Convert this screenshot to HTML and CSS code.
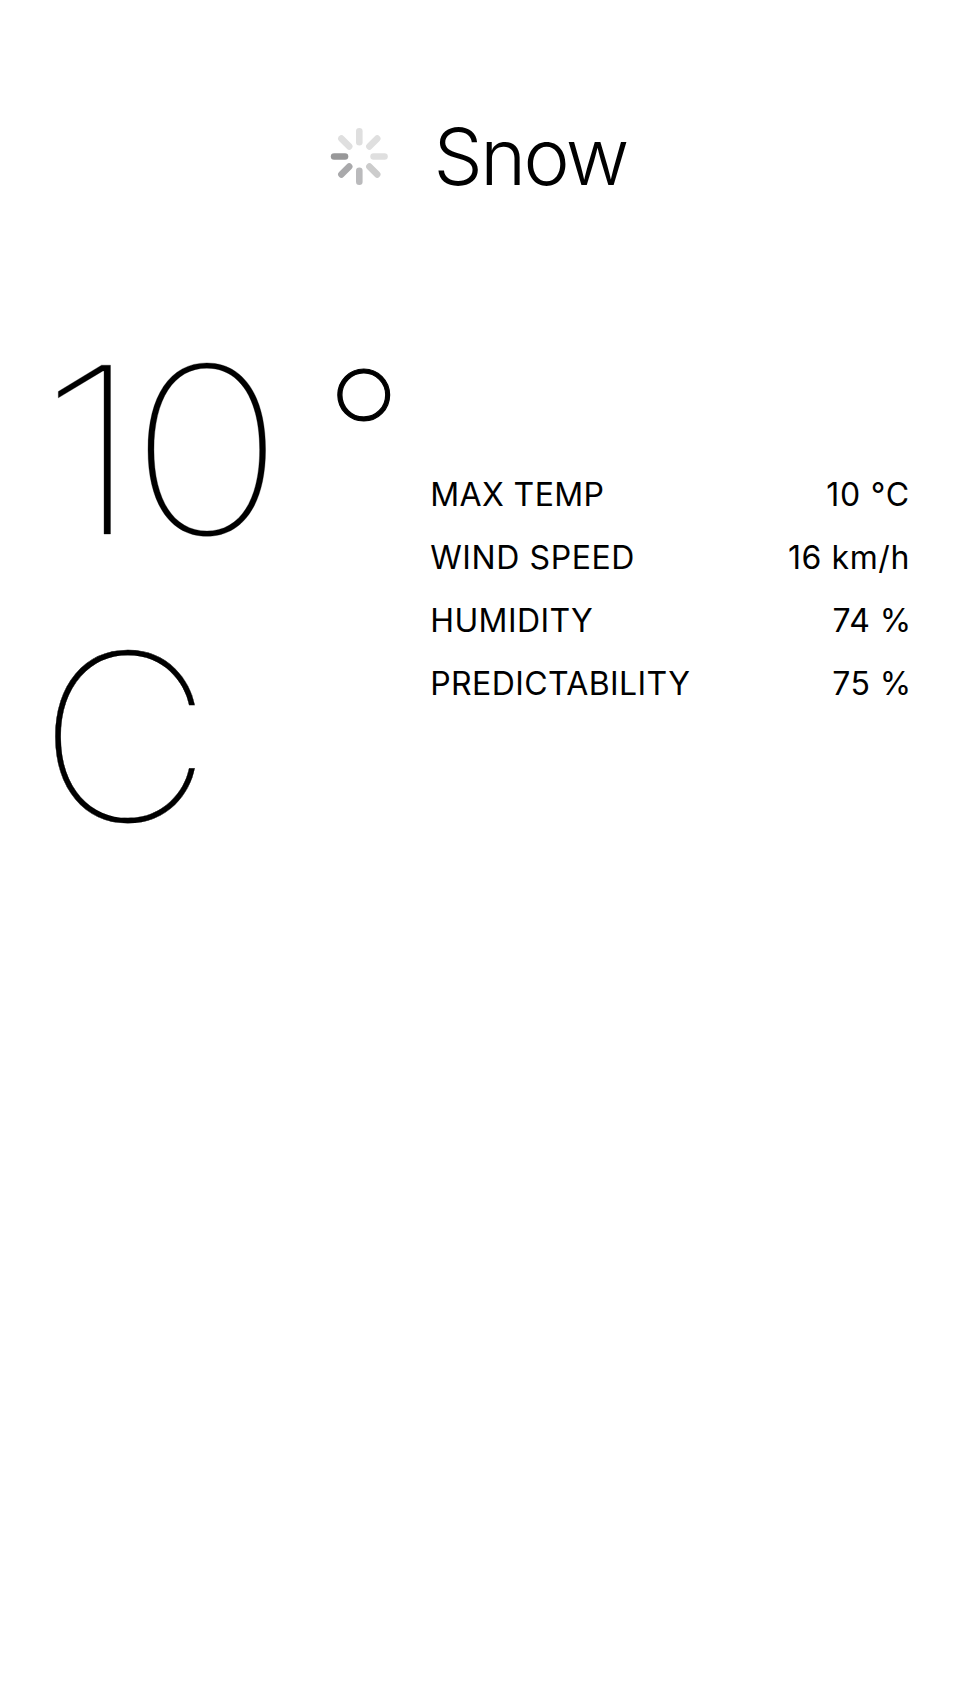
FILE: index.html
```html
<!DOCTYPE html>
<html lang="en">
<head>
<meta charset="utf-8">
<title>Weather</title>
<link rel="stylesheet" href="styles.css">
</head>
<body>
<main class="screen">
  <header class="condition">
    <svg class="spinner" viewBox="0 0 58 58" aria-hidden="true">
      <g stroke-width="6.600" stroke-linecap="round">
        <path d="M29.300 3.300V14.200" stroke="#dfdfdf"/>
        <path d="M47.200 10.600L39.400 18.400" stroke="#dfdfdf"/>
        <path d="M54.500 28.500H43.600" stroke="#dfdfdf"/>
        <path d="M47.200 46.400L39.400 38.600" stroke="#ccc"/>
        <path d="M29.300 53.700V42.800" stroke="#bababc"/>
        <path d="M11.400 46.400L19.200 38.600" stroke="#a9a9ab"/>
        <path d="M4.100 28.500H15" stroke="#989899"/>
        <path d="M11.400 10.600L19.200 18.400" stroke="#dfdfdf"/>
      </g>
    </svg>
    <h1 class="title">Snow</h1>
  </header>
  <section class="details">
    <p class="temperature"><span class="degrees"><span class="one">1</span><span class="zero">0</span><span class="degree">°</span></span><span class="unit">C</span></p>
    <dl class="stats">
      <div class="row"><dt>MAX TEMP</dt><dd class="max">10 °C</dd></div>
      <div class="row wind"><dt>WIND SPEED</dt><dd>16 km/h</dd></div>
      <div class="row"><dt>HUMIDITY</dt><dd class="percent">74 %</dd></div>
      <div class="row"><dt>PREDICTABILITY</dt><dd class="percent">75 %</dd></div>
    </dl>
  </section>
</main>
</body>
</html>
```
FILE: styles.css
```css
body { margin: 0; background: #fff; color: #000; font-family: Inter, sans-serif; }
.screen { min-height: 1704px; box-sizing: border-box; padding: 108px 50px 0; }
.condition { display: flex; align-items: center; height: 97px; padding-left: 280.3px; }
.spinner { width: 58px; height: 58px; fill: none; }
.title { margin: 0 0 0 45.2px; font-size: 78px; font-weight: 300; line-height: 96px; letter-spacing: -2.6px; }
.details { display: flex; padding-top: 101px; }
.temperature { margin: 0; width: 381px; font-size: 232px; font-weight: 100; line-height: 287px; -webkit-text-stroke: 0.3px #000; }
.degrees { display: flex; }
.one, .zero, .degree, .unit { display: block; flex: none; transform-origin: left center; }
.one { width: 91px; margin-left: -12px; transform: scaleX(1.23); }
.zero { width: 195px; transform: scaleX(1.135); }
.degree { font-size: 175px; line-height: 257px; -webkit-text-stroke: 1.2px #000; }
.unit { margin-left: -12px; transform: scaleX(1.035); }
.stats { margin: 157px 0 0; width: 480.8px; font-size: 32px; line-height: 63px; letter-spacing: 0.4px; }
.row { display: flex; justify-content: space-between; }
.wind { letter-spacing: 0.6px; }
.max { letter-spacing: 0.8px; }
.percent { margin-right: -1.500px; }
dd { margin: 0; }
```
